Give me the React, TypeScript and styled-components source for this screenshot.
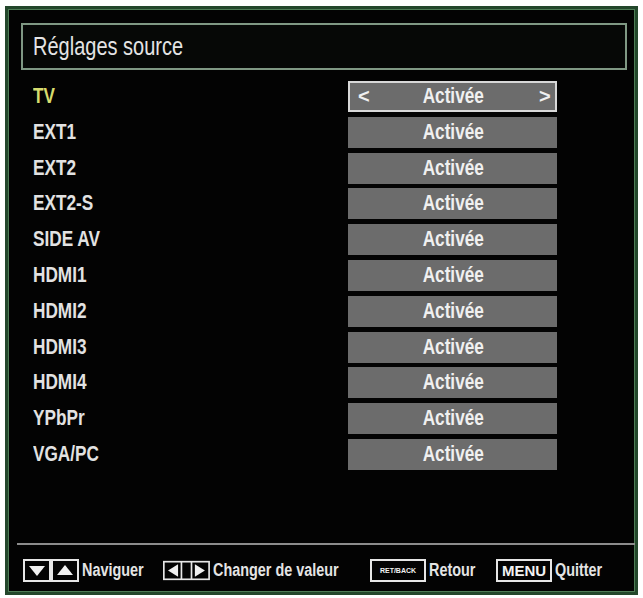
import React from 'react';
import styled, { createGlobalStyle } from 'styled-components';

const GlobalStyle = createGlobalStyle`
  body {
    margin: 0;
    background: #ffffff;
    font-family: "Liberation Sans", Arial, sans-serif;
  }
`;

// the TV font is a narrow sans; Liberation Sans squeezed gives Arial Narrow widths
const Narrow = styled.span<{ $origin?: string }>`
  display: inline-block;
  white-space: nowrap;
  transform: scaleX(0.8);
  transform-origin: ${p => p.$origin ?? 'left'} center;
`;

const Frame = styled.div`
  margin: 6px 5px 0;
  width: 633px;
  height: 589px;
  box-sizing: border-box;
  border: 3px solid #23472b;
  box-shadow: inset 0 0 0 1px #4e7c56;
  background: #030303;
  display: flex;
  flex-direction: column;
  padding: 14px 8px 0 13px;
`;

const TitleBox = styled.div`
  height: 47px;
  box-sizing: border-box;
  border: 2px solid #7f9883;
  background: #060806;
  display: flex;
  align-items: center;
  padding-left: 10px;
  color: #e4e4e4;
  font-size: 25px;
`;

const List = styled.div`
  margin-top: 11px;
  padding: 0 70px 0 12px;
  display: grid;
  grid-template-columns: 1fr 209px;
  grid-auto-rows: 31px;
  row-gap: 4.8px;
  align-items: center;
`;

const Label = styled.div<{ $active?: boolean }>`
  color: ${p => (p.$active ? '#d6dc6e' : '#e2e2e2')};
  font-size: 21.5px;
  font-weight: 700;
`;

const Value = styled.div<{ $active?: boolean }>`
  height: 31px;
  box-sizing: border-box;
  background: #6c6c6c;
  border: 2px solid ${p => (p.$active ? '#d8d8d8' : '#6c6c6c')};
  display: flex;
  align-items: center;
  justify-content: space-between;
  padding: 0 6px 0 8px;
  color: #f0f0f0;
  font-size: 21.5px;
  font-weight: 700;
`;

const ValueText = styled.span`
  flex: 1;
  text-align: center;
`;

const Arrow = styled.span<{ $hidden?: boolean }>`
  width: 10px;
  font-size: 20px;
  font-weight: 700;
  visibility: ${p => (p.$hidden ? 'hidden' : 'visible')};
`;

const Footer = styled.div`
  margin: auto -8px 0 -4px;
  border-top: 2px solid #8c8c8c;
  height: 49px;
  box-sizing: border-box;
  padding: 3px 0 0 6px;
  display: flex;
  align-items: center;
  color: #e4e4e4;
  font-size: 18px;
  font-weight: 700;
`;

const Hint = styled.div<{ $w?: number }>`
  display: flex;
  align-items: center;
  gap: 3px;
  width: ${p => (p.$w ? `${p.$w}px` : 'auto')};
  flex: none;
`;

const KeyBox = styled.span<{ $small?: boolean }>`
  width: 56px;
  height: 23px;
  box-sizing: border-box;
  border: 2px solid #e6e6e6;
  display: flex;
  align-items: center;
  justify-content: center;
  color: #f2f2f2;
  font-size: ${p => (p.$small ? '7px' : '15px')};
  font-weight: 700;
`;

const UpDown = () => (
  <svg width="56" height="23" viewBox="0 0 56 23">
    <rect x="1" y="1" width="26" height="21" fill="none" stroke="#e6e6e6" strokeWidth="2" />
    <rect x="29" y="1" width="26" height="21" fill="none" stroke="#e6e6e6" strokeWidth="2" />
    <polygon points="6,7 22,7 14,17" fill="#f0f0f0" />
    <polygon points="34,16 50,16 42,6" fill="#f0f0f0" />
  </svg>
);

const LeftRight = () => (
  <svg width="56" height="23" viewBox="0 0 56 23">
    <rect x="1" y="1" width="54" height="21" fill="none" stroke="#e6e6e6" strokeWidth="2" />
    <line x1="22" y1="1" x2="22" y2="22" stroke="#e6e6e6" strokeWidth="2" />
    <line x1="34" y1="1" x2="34" y2="22" stroke="#e6e6e6" strokeWidth="2" />
    <polygon points="18,4 18,19 6,11.5" fill="#f0f0f0" />
    <polygon points="38,4 38,19 50,11.5" fill="#f0f0f0" />
  </svg>
);

const sources = ['TV', 'EXT1', 'EXT2', 'EXT2-S', 'SIDE AV', 'HDMI1', 'HDMI2', 'HDMI3', 'HDMI4', 'YPbPr', 'VGA/PC'];

export default function App() {
  return (
    <>
      <GlobalStyle />
      <Frame>
        <TitleBox>
          <Narrow>Réglages source</Narrow>
        </TitleBox>
        <List>
          {sources.map((name, i) => (
            <React.Fragment key={name}>
              <Label $active={i === 0}>
                <Narrow>{name}</Narrow>
              </Label>
              <Value $active={i === 0}>
                <Arrow $hidden={i !== 0}>&lt;</Arrow>
                <ValueText>
                  <Narrow $origin="center">Activée</Narrow>
                </ValueText>
                <Arrow $hidden={i !== 0}>&gt;</Arrow>
              </Value>
            </React.Fragment>
          ))}
        </List>
        <Footer>
          <Hint $w={140}>
            <UpDown />
            <Narrow>Naviguer</Narrow>
          </Hint>
          <Hint $w={207}>
            <LeftRight />
            <Narrow>Changer de valeur</Narrow>
          </Hint>
          <Hint $w={126}>
            <KeyBox $small>RET/BACK</KeyBox>
            <Narrow>Retour</Narrow>
          </Hint>
          <Hint>
            <KeyBox>MENU</KeyBox>
            <Narrow>Quitter</Narrow>
          </Hint>
        </Footer>
      </Frame>
    </>
  );
}
